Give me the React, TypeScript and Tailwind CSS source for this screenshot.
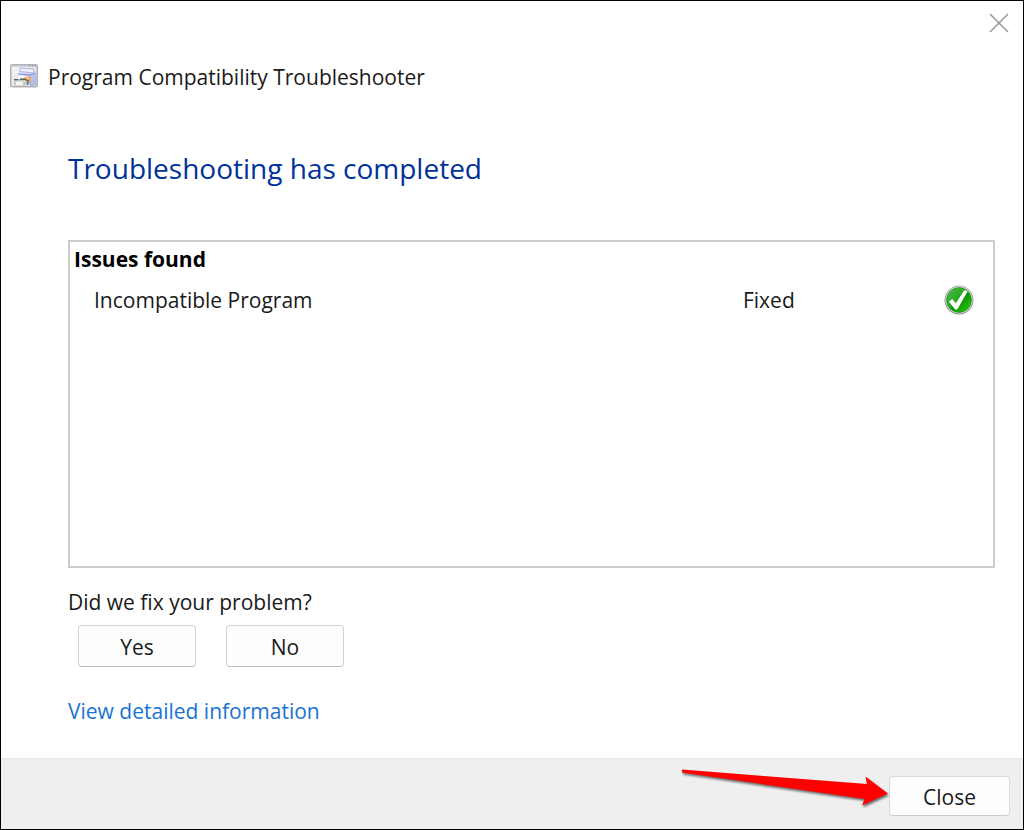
import type { ReactNode } from "react";

function ProgramIcon() {
  return (
    <svg width="28" height="24" viewBox="0 0 28 24" aria-hidden="true" className="shrink-0">
      <defs>
        <linearGradient id="pane" x1="0" y1="0" x2="1" y2="1">
          <stop offset="0" stopColor="#f8f8f8" />
          <stop offset="1" stopColor="#d6d9de" />
        </linearGradient>
        <linearGradient id="printer" x1="0" y1="0" x2="1" y2="1">
          <stop offset="0" stopColor="#e3e8fc" />
          <stop offset="1" stopColor="#a9b3e2" />
        </linearGradient>
      </defs>
      <rect x="0.75" y="0.75" width="26.5" height="22" rx="1.5" fill="url(#pane)" stroke="#b0b1b4" strokeWidth="1.5" />
      <path d="M1.5 2h25" stroke="#c3c5c9" strokeWidth="1.5" />
      <path d="M19 1.600h1.500M22 1.600h1.500M25 1.600h1" stroke="#85878c" strokeWidth="0.8" />
      <path d="M10 4l13.500 1 2.500 4.500V21l-4 1.500-2-1V13L7.500 11.500l2.500-4z" fill="url(#printer)" />
      <path d="M10 4l13.500 1 .8 4-14.300-1.500z" fill="#eef1fd" stroke="#a3ade2" strokeWidth="0.8" />
      <path d="M8 10l12 1.200 5-1.700" fill="none" stroke="#8794d4" strokeWidth="1.200" />
      <path d="M20 12v9" stroke="#8794d4" strokeWidth="0.8" />
      <path d="M8 11.200l11 1v2.300H7.500z" fill="#fafbff" />
      <path d="M13.500 14.500c1.500-2 5.500-3 7.500-.5l-.5 4h-3z" fill="#eba24a" />
      <path d="M16 13.500h3.500v1.800H16z" fill="#ffc27a" />
      <path d="M4 15.500l11-.5 3.500 1.500v5H4z" fill="#c9cdca" />
      <path d="M4 15.600h4.500M10 15.200h4.500l3.500 1.500-.5 4" fill="none" stroke="#5d6062" strokeWidth="1.400" />
      <path d="M6 17.500h8.500l-1.500 3.500H6z" fill="#f3f6f1" />
      <path d="M13 17.500l1.200 1.500-1.200 2" fill="none" stroke="#a6c797" strokeWidth="1" />
    </svg>
  );
}

function FixedIcon() {
  return (
    <svg width="30" height="30" viewBox="0 0 30 30" role="img" aria-label="Fixed" className="block">
      <defs>
        <linearGradient id="ring" x1="0" y1="0" x2="0" y2="1">
          <stop offset="0" stopColor="#b4b4b4" />
          <stop offset="1" stopColor="#858585" />
        </linearGradient>
        <linearGradient id="green" x1="0" y1="0" x2="1" y2="1">
          <stop offset="0" stopColor="#55bd50" />
          <stop offset="0.480" stopColor="#25a61f" />
          <stop offset="0.520" stopColor="#079000" />
          <stop offset="1" stopColor="#35d414" />
        </linearGradient>
      </defs>
      <circle cx="15" cy="15" r="14.500" fill="url(#ring)" />
      <circle cx="15" cy="15" r="13.500" fill="#e4e6e4" />
      <circle cx="15" cy="15" r="12.500" fill="url(#green)" stroke="#16851a" strokeWidth="0.600" />
      <path d="M5 16.500l3.200-2.500 3.600 4.300L20.500 5l3.200 1.300L13.200 24.500h-2.200z" fill="#fff" />
    </svg>
  );
}

function CloseGlyph() {
  return (
    <svg width="20" height="20" viewBox="0 0 20 20" aria-hidden="true">
      <path d="M1 1l18 18M19 1L1 19" stroke="#999" strokeWidth="1.600" />
    </svg>
  );
}

function Arrow() {
  return (
    <svg
      width="212"
      height="60"
      viewBox="0 0 212 60"
      aria-hidden="true"
      className="pointer-events-none absolute top-1/2 right-full -translate-y-1/2 overflow-visible drop-shadow-[1px_2px_1px_rgba(0,0,0,0.55)]"
    >
      <path d="M5 3.500L190 18l-1.500-7.500L211 27.500l-26 12 2.500-6.500L5 6.500z" fill="#f00" />
    </svg>
  );
}

function DialogButton({ children, className }: { children: ReactNode; className: string }) {
  return (
    <button type="button" className={`rounded border bg-[#fdfdfd] pt-0.5 leading-6 ${className}`}>
      {children}
    </button>
  );
}

export default function App() {
  return (
    <div className="flex min-h-screen flex-col border border-black bg-white font-['Open_Sans','Noto_Sans',sans-serif] text-[21px] leading-7 text-[#1a1a1a]">
      <header>
        <div className="flex justify-end px-[13px] pt-[11px]">
          <button type="button" aria-label="Close window" className="p-px">
            <CloseGlyph />
          </button>
        </div>
        <div className="flex items-end gap-[10px] px-[9px] pt-[29px]">
          <div className="pb-[3px]">
            <ProgramIcon />
          </div>
          <span>Program Compatibility Troubleshooter</span>
        </div>
      </header>

      <main className="flex grow flex-col pr-7 pl-[67px]">
        <h1 className="pt-[57px] text-[28px] leading-10 text-[#003399]">Troubleshooting has completed</h1>

        <section className="mt-[52px] grow border-2 border-[#cdcdcd] px-1 pt-[3px]">
          <table className="w-full table-fixed text-left">
            <colgroup>
              <col />
              <col className="w-[201px]" />
              <col className="w-[45px]" />
            </colgroup>
            <thead>
              <tr>
                <th scope="col" colSpan={3} className="font-bold text-black">
                  Issues found
                </th>
              </tr>
            </thead>
            <tbody>
              <tr>
                <td className="pt-3 pl-5">Incompatible Program</td>
                <td className="pt-3">Fixed</td>
                <td className="pt-3">
                  <FixedIcon />
                </td>
              </tr>
            </tbody>
          </table>
        </section>

        <p className="pt-5">Did we fix your problem?</p>
        <div className="flex gap-[30px] pt-[9px] pl-[10px]">
          <DialogButton className="h-[42px] w-[118px] border-[#d2d2d2] border-b-[#bcbcbc]">Yes</DialogButton>
          <DialogButton className="h-[42px] w-[118px] border-[#d2d2d2] border-b-[#bcbcbc]">No</DialogButton>
        </div>
        <div className="pt-[30px] pb-[33px]">
          <a href="#details" className="text-[#1a73d0]">
            View detailed information
          </a>
        </div>
      </main>

      <footer className="flex justify-end border-t border-[#e6e6e6] bg-[#efefef] px-[13px] pt-[17px] pb-[13px]">
        <div className="relative">
          <DialogButton className="block h-10 w-[121px] border-[#dadada] border-b-[#cccccc]">Close</DialogButton>
          <Arrow />
        </div>
      </footer>
    </div>
  );
}
